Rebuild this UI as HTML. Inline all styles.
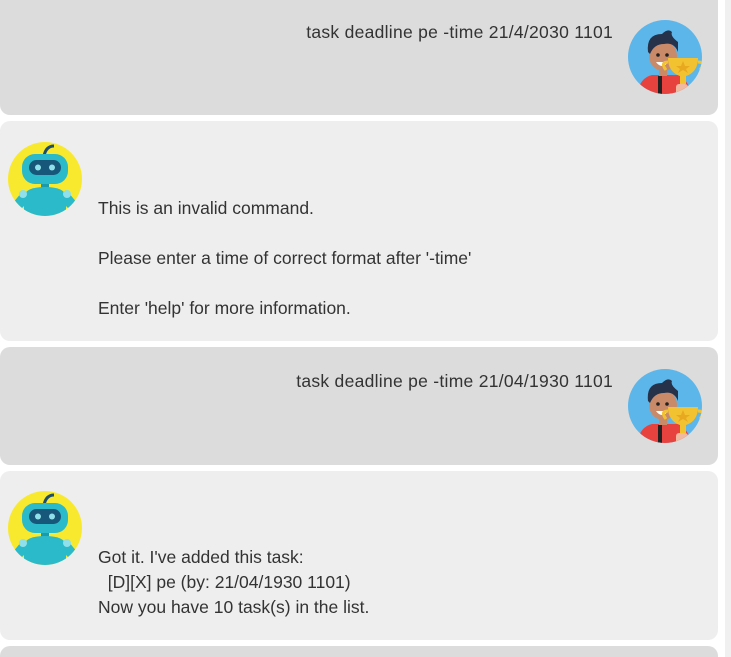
<!DOCTYPE html>
<html><head><style>
html,body{margin:0;width:731px;height:657px;overflow:hidden}
body{background:#fff;font-family:"Liberation Sans",sans-serif;color:#333;font-size:17.5px;position:relative}
.box{position:absolute;left:0;width:718px;border-radius:10px}
.u{background:#dcdcdc}
.b{background:#eeeeee}
.t{position:absolute;white-space:pre;line-height:25px}
.sb{position:absolute;right:0;top:0;width:6px;height:657px;background:#f0f0f0}
svg{position:absolute}
</style></head><body>
<div class="box u" style="top:-10px;height:125px"></div>
<div class="box b" style="top:121px;height:220px"></div>
<div class="box u" style="top:347px;height:118px"></div>
<div class="box b" style="top:471px;height:169px"></div>
<div class="box u" style="top:646px;height:11px;border-radius:10px 10px 0 0"></div>
<div class="sb"></div>

<div class="t" style="right:118px;top:20px;letter-spacing:0.28px">task deadline pe -time 21/4/2030 1101</div>
<div class="t" style="left:98px;top:196px">This is an invalid command.

Please enter a time of correct format after '-time'

Enter 'help' for more information.</div>
<div class="t" style="right:118px;top:369px;letter-spacing:0.28px">task deadline pe -time 21/04/1930 1101</div>
<div class="t" style="left:98px;top:545px">Got it. I've added this task:
  [D][X] pe (by: 21/04/1930 1101)
Now you have 10 task(s) in the list.</div>

<svg width="0" height="0"><defs>
<clipPath id="cu"><circle cx="37" cy="37" r="37"/></clipPath>
<g id="user">
<circle cx="37" cy="37" r="37" fill="#5db6ea"/>
<g clip-path="url(#cu)">
<path d="M8 80 Q10 58 24 55 L50 55 Q62 60 64 80Z" fill="#e8423f"/>
<rect x="30" y="56" width="4" height="20" fill="#222"/>
<rect x="31" y="46" width="8" height="10" fill="#c98a6a"/>
<ellipse cx="35" cy="36" rx="14" ry="15" fill="#c98a6a"/>
<path d="M20 32 Q18 14 34 14 Q40 8 44 12 Q42 16 50 22 L50 32 Q46 22 36 24 Q26 24 22 34Z" fill="#25324a"/>
<circle cx="30" cy="35" r="1.8" fill="#222"/><circle cx="39" cy="35" r="1.8" fill="#222"/>
<path d="M28 42 Q34 50 40 42Z" fill="#fff"/>
<path d="M40 38 L70 38 Q70 52 58 56 L52 56 Q40 52 40 38Z" fill="#f2c230"/>
<path d="M40 42 Q32 42 38 50 M70 42 Q78 42 72 50" stroke="#f2c230" stroke-width="3" fill="none"/>
<polygon points="55,41 57,46 62,46 58,49 60,53 55,50 50,53 52,49 48,46 53,46" fill="#e8a820"/>
<rect x="52" y="56" width="6" height="8" fill="#f2c230"/>
<rect x="48" y="64" width="12" height="14" rx="3" fill="#f1b9a0"/>
</g></g>
<g id="bot">
<circle cx="37" cy="37" r="37" fill="#f9e92e"/>
<g clip-path="url(#cu)">
<path d="M36 14 Q38 4 46 4" stroke="#1d4e6e" stroke-width="3" fill="none"/>
<rect x="14" y="12" width="46" height="30" rx="13" fill="#2bbac9"/>
<rect x="21" y="18" width="32" height="15" rx="7.5" fill="#16577a"/>
<circle cx="30" cy="25.5" r="3" fill="#8fe0ea"/><circle cx="44" cy="25.5" r="3" fill="#8fe0ea"/>
<rect x="33" y="42" width="8" height="4" fill="#1d9aaa"/>
<path d="M16 54 Q18 45 37 45 Q56 45 58 54 L58 80 L16 80Z" fill="#2bbac9"/>
<path d="M4 62 L14 50 L18 62 L10 70Z" fill="#2bbac9"/>
<path d="M70 62 L60 50 L56 62 L64 70Z" fill="#2bbac9"/>
<circle cx="15" cy="52" r="4" fill="#8fe0ea"/><circle cx="59" cy="52" r="4" fill="#8fe0ea"/>
</g></g>
</defs></svg>
<svg style="left:628px;top:20px" width="75" height="75"><use href="#user"/></svg>
<svg style="left:628px;top:369px" width="75" height="75"><use href="#user"/></svg>
<svg style="left:8px;top:142px" width="75" height="76"><use href="#bot"/></svg>
<svg style="left:8px;top:491px" width="75" height="76"><use href="#bot"/></svg>
</body></html>
